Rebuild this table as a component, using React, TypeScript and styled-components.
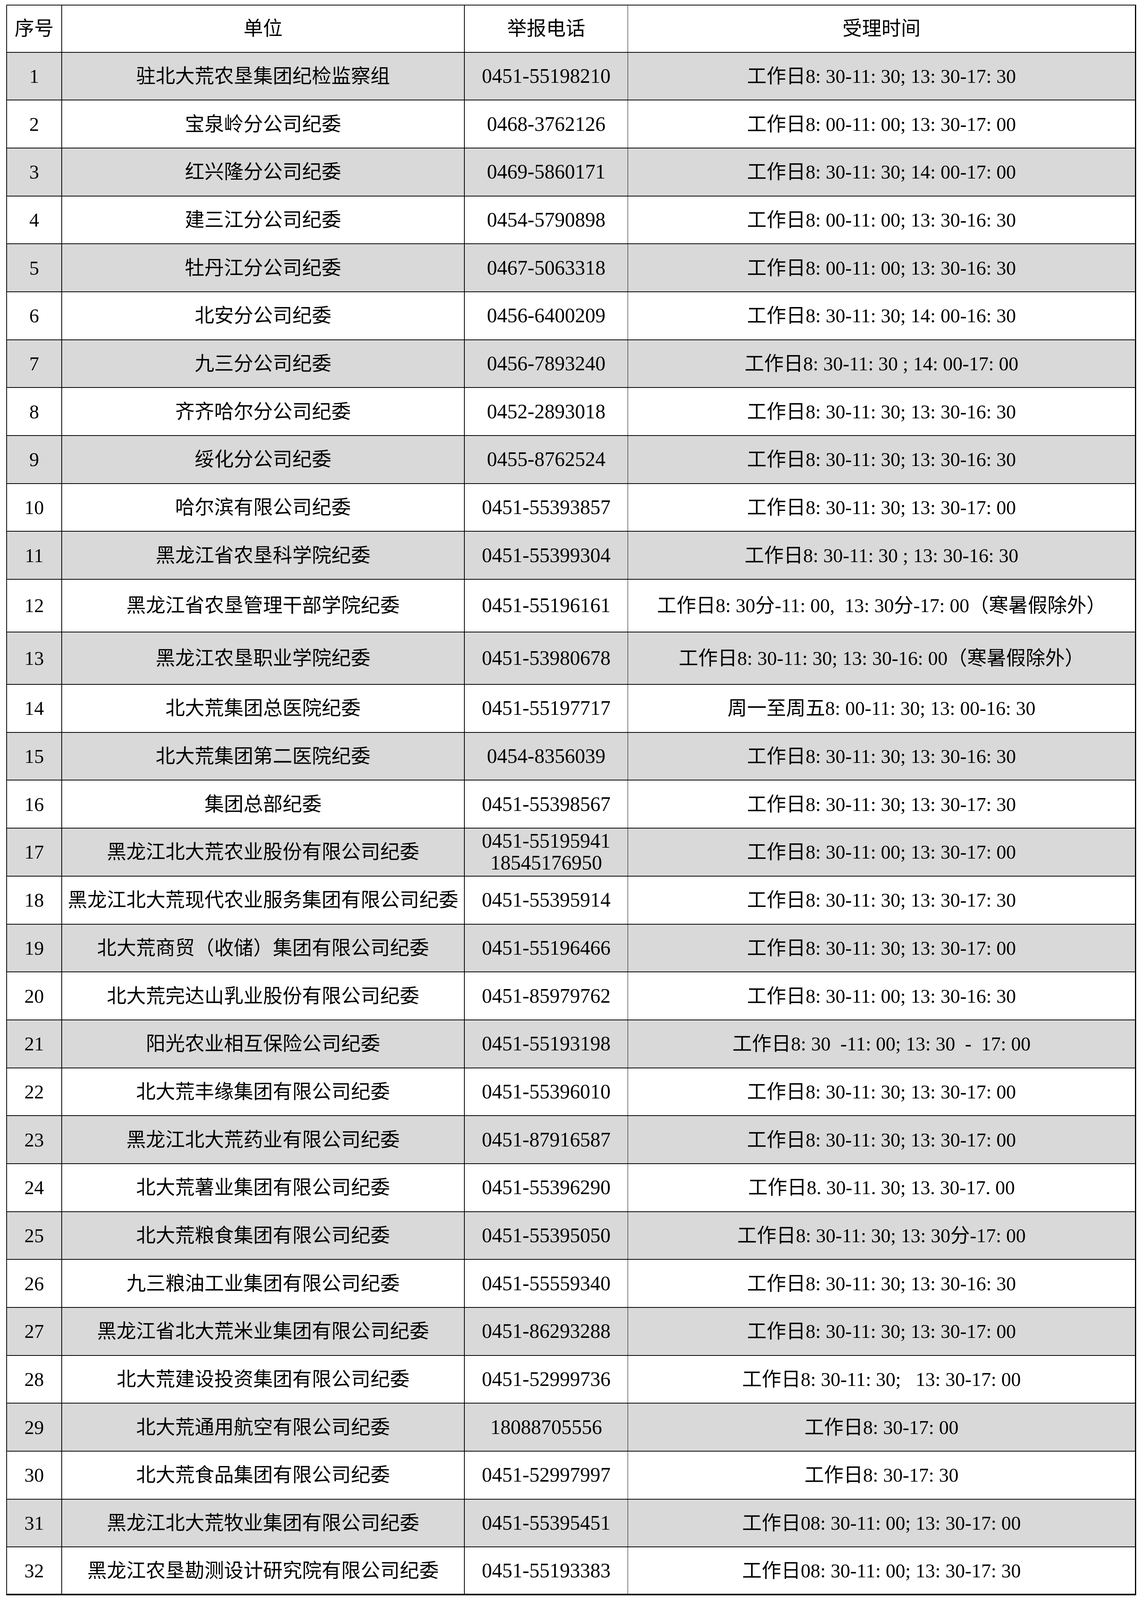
import React from "react";
import styled, { createGlobalStyle } from "styled-components";

/* The visible frame is 2924 x 4096; the reference is 2924 x 5542.
   Vertical measures are taken from the reference and mapped onto the frame. */
const S = 4096 / 5542;
const v = (px: number) => px * S;

const GlobalStyle = createGlobalStyle`
  html, body {
    margin: 0;
    padding: 0;
    background: #ffffff;
  }
  body {
    font-family: "Liberation Serif", "Noto Sans CJK SC", serif;
    color: #000000;
  }
`;

const Page = styled.div`
  box-sizing: border-box;
  width: 2924px;
  padding: ${v(16)}px 0 0 16px;
`;

const Table = styled.div`
  box-sizing: border-box;
  width: 2893px;
  border-top: 2px solid #000;
  border-left: 2px solid #000;
  border-right: 3px solid #000;
  border-bottom: 4px solid #000;
  display: flex;
  flex-direction: column;
`;

const Row = styled.div<{ $shaded?: boolean; $height: number; $last?: boolean }>`
  box-sizing: border-box;
  display: grid;
  grid-template-columns: 141px 1031px 418px 1fr;
  flex: 0 0 ${(p) => p.$height}px;
  height: ${(p) => p.$height}px;
  background: ${(p) => (p.$shaded ? "#d9d9d9" : "#ffffff")};
  border-bottom: ${(p) => (p.$last ? "none" : "2px solid #000")};
`;

const Cell = styled.div<{ $border?: number }>`
  box-sizing: border-box;
  display: flex;
  flex-direction: column;
  align-items: center;
  justify-content: center;
  text-align: center;
  border-right: ${(p) => (p.$border ? `${p.$border}px solid #000` : "none")};
  font-size: 50px;
  line-height: 56px;
  white-space: pre;
  overflow: hidden;
`;

const Phone = styled.span`
  font-size: 52px;
  line-height: 56px;
`;

type Entry = {
  unit: string;
  phone: string[];
  time: string;
};

const rows: Entry[] = [
  { unit: "驻北大荒农垦集团纪检监察组", phone: ["0451-55198210"], time: "工作日8: 30-11: 30; 13: 30-17: 30" },
  { unit: "宝泉岭分公司纪委", phone: ["0468-3762126"], time: "工作日8: 00-11: 00; 13: 30-17: 00" },
  { unit: "红兴隆分公司纪委", phone: ["0469-5860171"], time: "工作日8: 30-11: 30; 14: 00-17: 00" },
  { unit: "建三江分公司纪委", phone: ["0454-5790898"], time: "工作日8: 00-11: 00; 13: 30-16: 30" },
  { unit: "牡丹江分公司纪委", phone: ["0467-5063318"], time: "工作日8: 00-11: 00; 13: 30-16: 30" },
  { unit: "北安分公司纪委", phone: ["0456-6400209"], time: "工作日8: 30-11: 30; 14: 00-16: 30" },
  { unit: "九三分公司纪委", phone: ["0456-7893240"], time: "工作日8: 30-11: 30 ; 14: 00-17: 00" },
  { unit: "齐齐哈尔分公司纪委", phone: ["0452-2893018"], time: "工作日8: 30-11: 30; 13: 30-16: 30" },
  { unit: "绥化分公司纪委", phone: ["0455-8762524"], time: "工作日8: 30-11: 30; 13: 30-16: 30" },
  { unit: "哈尔滨有限公司纪委", phone: ["0451-55393857"], time: "工作日8: 30-11: 30; 13: 30-17: 00" },
  { unit: "黑龙江省农垦科学院纪委", phone: ["0451-55399304"], time: "工作日8: 30-11: 30 ; 13: 30-16: 30" },
  { unit: "黑龙江省农垦管理干部学院纪委", phone: ["0451-55196161"], time: "工作日8: 30分-11: 00,  13: 30分-17: 00（寒暑假除外）" },
  { unit: "黑龙江农垦职业学院纪委", phone: ["0451-53980678"], time: "工作日8: 30-11: 30; 13: 30-16: 00（寒暑假除外）" },
  { unit: "北大荒集团总医院纪委", phone: ["0451-55197717"], time: "周一至周五8: 00-11: 30; 13: 00-16: 30" },
  { unit: "北大荒集团第二医院纪委", phone: ["0454-8356039"], time: "工作日8: 30-11: 30; 13: 30-16: 30" },
  { unit: "集团总部纪委", phone: ["0451-55398567"], time: "工作日8: 30-11: 30; 13: 30-17: 30" },
  { unit: "黑龙江北大荒农业股份有限公司纪委", phone: ["0451-55195941", "18545176950"], time: "工作日8: 30-11: 00; 13: 30-17: 00" },
  { unit: "黑龙江北大荒现代农业服务集团有限公司纪委", phone: ["0451-55395914"], time: "工作日8: 30-11: 30; 13: 30-17: 30" },
  { unit: "北大荒商贸（收储）集团有限公司纪委", phone: ["0451-55196466"], time: "工作日8: 30-11: 30; 13: 30-17: 00" },
  { unit: "北大荒完达山乳业股份有限公司纪委", phone: ["0451-85979762"], time: "工作日8: 30-11: 00; 13: 30-16: 30" },
  { unit: "阳光农业相互保险公司纪委", phone: ["0451-55193198"], time: "工作日8: 30  -11: 00; 13: 30  -  17: 00" },
  { unit: "北大荒丰缘集团有限公司纪委", phone: ["0451-55396010"], time: "工作日8: 30-11: 30; 13: 30-17: 00" },
  { unit: "黑龙江北大荒药业有限公司纪委", phone: ["0451-87916587"], time: "工作日8: 30-11: 30; 13: 30-17: 00" },
  { unit: "北大荒薯业集团有限公司纪委", phone: ["0451-55396290"], time: "工作日8. 30-11. 30; 13. 30-17. 00" },
  { unit: "北大荒粮食集团有限公司纪委", phone: ["0451-55395050"], time: "工作日8: 30-11: 30; 13: 30分-17: 00" },
  { unit: "九三粮油工业集团有限公司纪委", phone: ["0451-55559340"], time: "工作日8: 30-11: 30; 13: 30-16: 30" },
  { unit: "黑龙江省北大荒米业集团有限公司纪委", phone: ["0451-86293288"], time: "工作日8: 30-11: 30; 13: 30-17: 00" },
  { unit: "北大荒建设投资集团有限公司纪委", phone: ["0451-52999736"], time: "工作日8: 30-11: 30;   13: 30-17: 00" },
  { unit: "北大荒通用航空有限公司纪委", phone: ["18088705556"], time: "工作日8: 30-17: 00" },
  { unit: "北大荒食品集团有限公司纪委", phone: ["0451-52997997"], time: "工作日8: 30-17: 30" },
  { unit: "黑龙江北大荒牧业集团有限公司纪委", phone: ["0451-55395451"], time: "工作日08: 30-11: 00; 13: 30-17: 00" },
  { unit: "黑龙江农垦勘测设计研究院有限公司纪委", phone: ["0451-55193383"], time: "工作日08: 30-11: 00; 13: 30-17: 30" },
];

export default function App() {
  return (
    <>
      <GlobalStyle />
      <Page>
        <Table>
          <Row $height={v(166) - 2}>
            <Cell $border={2}>序号</Cell>
            <Cell $border={2}>单位</Cell>
            <Cell $border={1}>举报电话</Cell>
            <Cell>受理时间</Cell>
          </Row>
          {rows.map((r, i) => {
            const n = i + 1;
            const tall = n === 12 || n === 13;
            const last = n === rows.length;
            const h = tall ? v(182) : last ? v(166) - 4 : v(166);
            return (
              <Row key={n} $shaded={n % 2 === 1} $height={h} $last={last}>
                <Cell $border={2}>{n}</Cell>
                <Cell $border={2}>{r.unit}</Cell>
                <Cell $border={1}>
                  {r.phone.map((p) => (
                    <Phone key={p}>{p}</Phone>
                  ))}
                </Cell>
                <Cell>{r.time}</Cell>
              </Row>
            );
          })}
        </Table>
      </Page>
    </>
  );
}
